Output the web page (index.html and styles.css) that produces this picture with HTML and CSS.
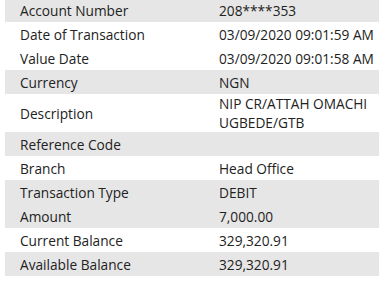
FILE: index.html
```html
<!DOCTYPE html>
<html lang="en">
  <head>
    <meta charset="UTF-8" />
    <meta name="viewport" content="width=device-width, initial-scale=1.0" />
    <title>Transaction Details</title>
    <link rel="stylesheet" href="styles.css">
  </head>
  <body>
    <table class="details">
      <tr class="shaded"><td>Account Number</td><td>208****353</td></tr>
      <tr><td>Date of Transaction</td><td>03/09/2020 09:01:59 AM</td></tr>
      <tr><td>Value Date</td><td>03/09/2020 09:01:58 AM</td></tr>
      <tr class="shaded"><td>Currency</td><td>NGN</td></tr>
      <tr class="tall"><td>Description</td><td>NIP CR/ATTAH OMACHI UGBEDE/GTB</td></tr>
      <tr class="shaded"><td>Reference Code</td><td></td></tr>
      <tr><td>Branch</td><td>Head Office</td></tr>
      <tr class="shaded"><td>Transaction Type</td><td>DEBIT</td></tr>
      <tr class="shaded"><td>Amount</td><td>7,000.00</td></tr>
      <tr><td>Current Balance</td><td>329,320.91</td></tr>
      <tr class="shaded"><td>Available Balance</td><td>329,320.91</td></tr>
    </table>
  </body>
</html>
```
FILE: styles.css
```css
body {
  margin: 0;
  background-color: #fff;
  font-family: "Open Sans", Arial, sans-serif;
  font-size: 13.7px;
  color: #222;
}
.details {
  margin: -2px 0 0 5px;
  width: 374px;
  border-collapse: collapse;
}
.details td {
  height: 24px;
  padding: 0;
  vertical-align: middle;
  line-height: 19px;
}
.details td:first-child {
  width: 199px;
  padding-left: 15px;
}
.details td:last-child {
  padding-right: 4px;
}
.details tr.tall td {
  height: 38px;
}
.details tr.shaded {
  background-color: #e6e6e6;
}
```
